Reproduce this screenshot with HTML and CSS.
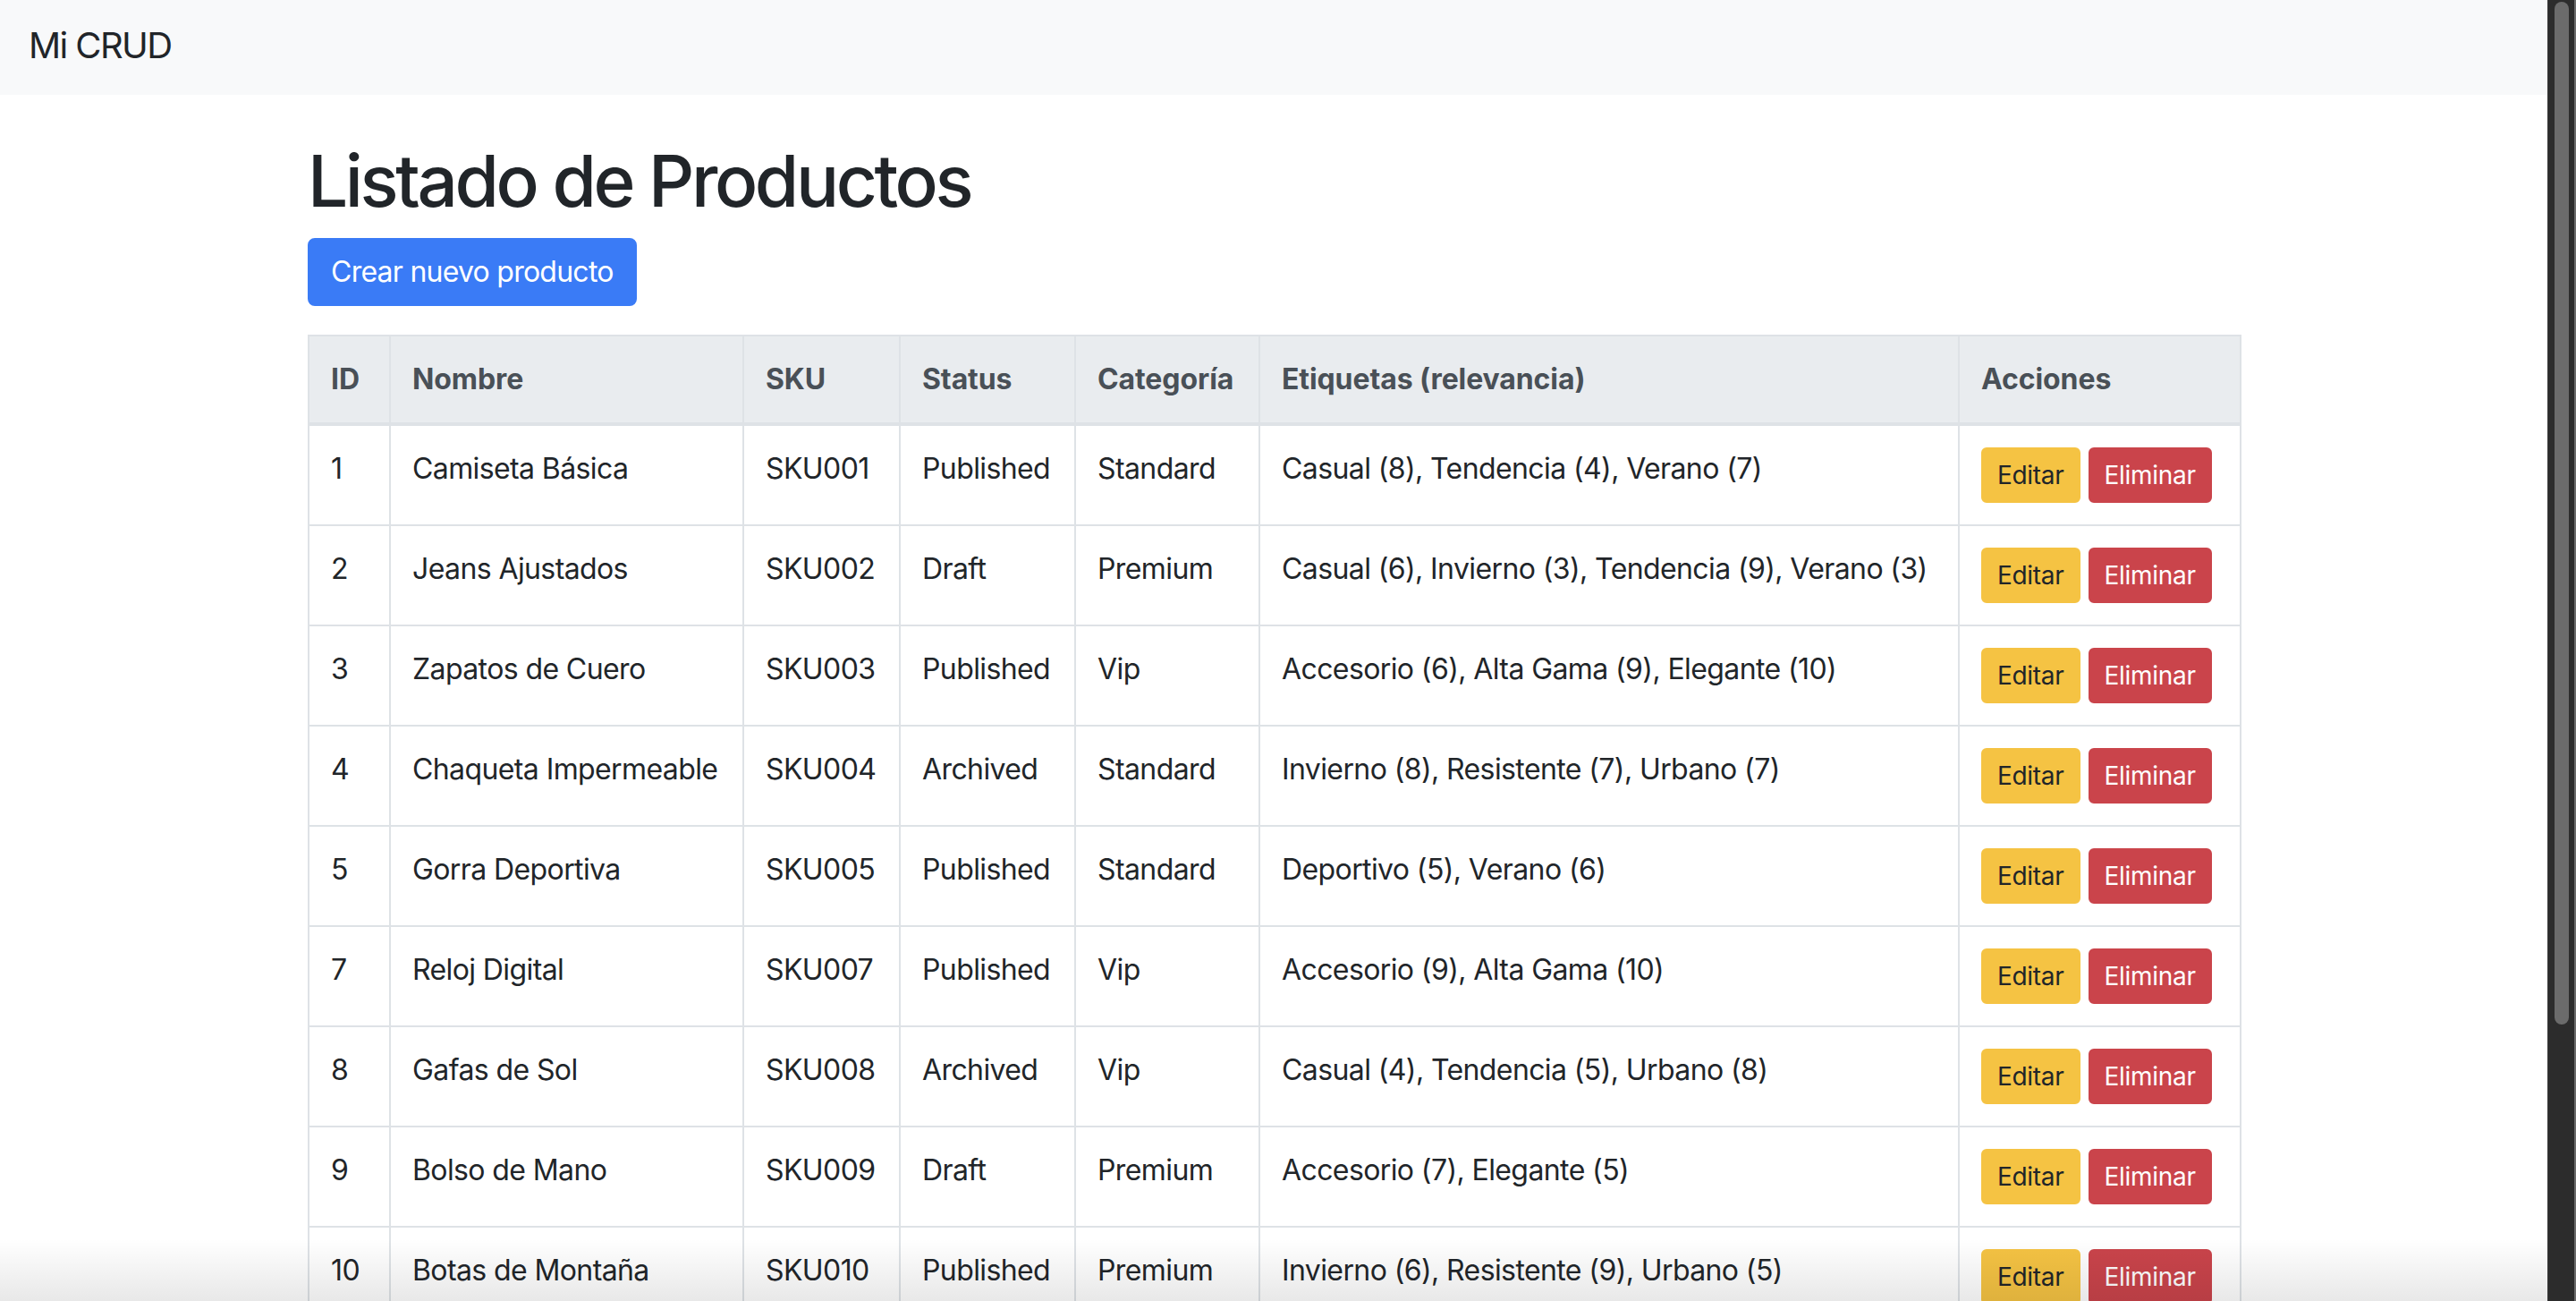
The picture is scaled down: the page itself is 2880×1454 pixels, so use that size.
FILE: index.html
```html
<!DOCTYPE html>
<html lang="es">
<head>
<meta charset="utf-8">
<title>Mi CRUD</title>
<link rel="stylesheet" href="styles.css">
</head>
<body>
<div class="window">
  <div class="page">
    <nav class="navbar"><span class="brand">Mi CRUD</span></nav>
    <main class="container">
      <h1 class="title">Listado de Productos</h1>
      <a class="btn btn-primary">Crear nuevo producto</a>
      <table class="table">
        <colgroup>
          <col class="c-id"><col class="c-name"><col class="c-sku"><col class="c-status"><col class="c-cat"><col class="c-tags"><col class="c-actions">
        </colgroup>
        <thead>
          <tr><th>ID</th><th>Nombre</th><th>SKU</th><th>Status</th><th>Categoría</th><th>Etiquetas (relevancia)</th><th>Acciones</th></tr>
        </thead>
        <tbody>
          <tr><td>1</td><td>Camiseta Básica</td><td>SKU001</td><td>Published</td><td>Standard</td><td>Casual (8), Tendencia (4), Verano (7)</td><td><div class="actions"><a class="btn btn-sm btn-warning">Editar</a><a class="btn btn-sm btn-danger">Eliminar</a></div></td></tr>
          <tr><td>2</td><td>Jeans Ajustados</td><td>SKU002</td><td>Draft</td><td>Premium</td><td>Casual (6), Invierno (3), Tendencia (9), Verano (3)</td><td><div class="actions"><a class="btn btn-sm btn-warning">Editar</a><a class="btn btn-sm btn-danger">Eliminar</a></div></td></tr>
          <tr><td>3</td><td>Zapatos de Cuero</td><td>SKU003</td><td>Published</td><td>Vip</td><td>Accesorio (6), Alta Gama (9), Elegante (10)</td><td><div class="actions"><a class="btn btn-sm btn-warning">Editar</a><a class="btn btn-sm btn-danger">Eliminar</a></div></td></tr>
          <tr><td>4</td><td>Chaqueta Impermeable</td><td>SKU004</td><td>Archived</td><td>Standard</td><td>Invierno (8), Resistente (7), Urbano (7)</td><td><div class="actions"><a class="btn btn-sm btn-warning">Editar</a><a class="btn btn-sm btn-danger">Eliminar</a></div></td></tr>
          <tr><td>5</td><td>Gorra Deportiva</td><td>SKU005</td><td>Published</td><td>Standard</td><td>Deportivo (5), Verano (6)</td><td><div class="actions"><a class="btn btn-sm btn-warning">Editar</a><a class="btn btn-sm btn-danger">Eliminar</a></div></td></tr>
          <tr><td>7</td><td>Reloj Digital</td><td>SKU007</td><td>Published</td><td>Vip</td><td>Accesorio (9), Alta Gama (10)</td><td><div class="actions"><a class="btn btn-sm btn-warning">Editar</a><a class="btn btn-sm btn-danger">Eliminar</a></div></td></tr>
          <tr><td>8</td><td>Gafas de Sol</td><td>SKU008</td><td>Archived</td><td>Vip</td><td>Casual (4), Tendencia (5), Urbano (8)</td><td><div class="actions"><a class="btn btn-sm btn-warning">Editar</a><a class="btn btn-sm btn-danger">Eliminar</a></div></td></tr>
          <tr><td>9</td><td>Bolso de Mano</td><td>SKU009</td><td>Draft</td><td>Premium</td><td>Accesorio (7), Elegante (5)</td><td><div class="actions"><a class="btn btn-sm btn-warning">Editar</a><a class="btn btn-sm btn-danger">Eliminar</a></div></td></tr>
          <tr><td>10</td><td>Botas de Montaña</td><td>SKU010</td><td>Published</td><td>Premium</td><td>Invierno (6), Resistente (9), Urbano (5)</td><td><div class="actions"><a class="btn btn-sm btn-warning">Editar</a><a class="btn btn-sm btn-danger">Eliminar</a></div></td></tr>
        </tbody>
      </table>
    </main>
    <div class="bottom-shade"></div>
  </div>
  <div class="scrollbar"><div class="thumb"></div></div>
</div>
</body>
</html>
```

FILE: styles.css
```css
* { box-sizing: border-box; }
html, body { margin: 0; padding: 0; height: 100%; overflow: hidden; }
body {
  font-family: Inter, "Noto Sans", "Liberation Sans", sans-serif;
  font-size: 32px;
  line-height: 1.5;
  color: #212529;
  background: #ffffff;
  letter-spacing: -0.6px;
}
.window { display: flex; height: 100vh; }
.page { flex: 1; position: relative; overflow: hidden; background: #fff; }
.navbar {
  height: 106px;
  background: #f8f9fa;
  display: flex;
  align-items: center;
  padding: 0 32px;
}
.brand { font-size: 40px; line-height: 1; color: #212529; letter-spacing: -1.6px; margin-top: -4px; }
.container { width: 2160px; margin: 48px auto 0; }
.title {
  font-size: 80px;
  font-weight: 500;
  line-height: 1.2;
  margin: 0 0 16px;
  letter-spacing: -3.4px;
}
.btn {
  display: inline-block;
  font-size: 32px;
  line-height: 48px;
  padding: 12px 24px;
  border: 2px solid transparent;
  border-radius: 8px;
  text-decoration: none;
  white-space: nowrap;
}
.btn-primary { background: #3a7bf6; border-color: #3a7bf6; color: #fff; margin-bottom: 32px; letter-spacing: -0.75px; }
.btn-sm { font-size: 28px; line-height: 42px; padding: 8px 16px; border-radius: 6px; letter-spacing: -0.3px; }
.btn-warning { background: #f5c343; border-color: #f5c343; color: #212529; }
.btn-danger { background: #ca444b; border-color: #ca444b; color: #fff; }
.table {
  width: 100%;
  table-layout: fixed;
  border-collapse: collapse;
  border: 2px solid #dee2e6;
}
.c-id { width: 91px; }
.c-name { width: 395px; }
.c-sku { width: 175px; }
.c-status { width: 196px; }
.c-cat { width: 206px; }
.c-tags { width: 782px; }
.c-actions { width: 315px; }
.table th, .table td {
  padding: 24px;
  border: 2px solid #dee2e6;
  vertical-align: top;
  text-align: left;
  white-space: nowrap;
}
.table thead th {
  background: #e9ecef;
  color: #495057;
  font-weight: 700;
  letter-spacing: -0.1px;
  border-bottom: 4px solid #dee2e6;
}
.actions { display: flex; gap: 9px; }
.bottom-shade {
  position: absolute;
  left: 0; right: 0; bottom: 0;
  height: 70px;
  background: linear-gradient(to bottom, rgba(0,0,0,0), rgba(0,0,0,0.09));
  pointer-events: none;
}
.scrollbar {
  width: 32px;
  background: #2c2c2c;
  border-left: 1px solid #3a3a3a;
  border-right: 2px solid #6a6a6a;
  padding: 2px 6px 0 7px;
}
.thumb {
  height: 1143px;
  border-radius: 8px;
  background: #6b6b6b;
}
```
